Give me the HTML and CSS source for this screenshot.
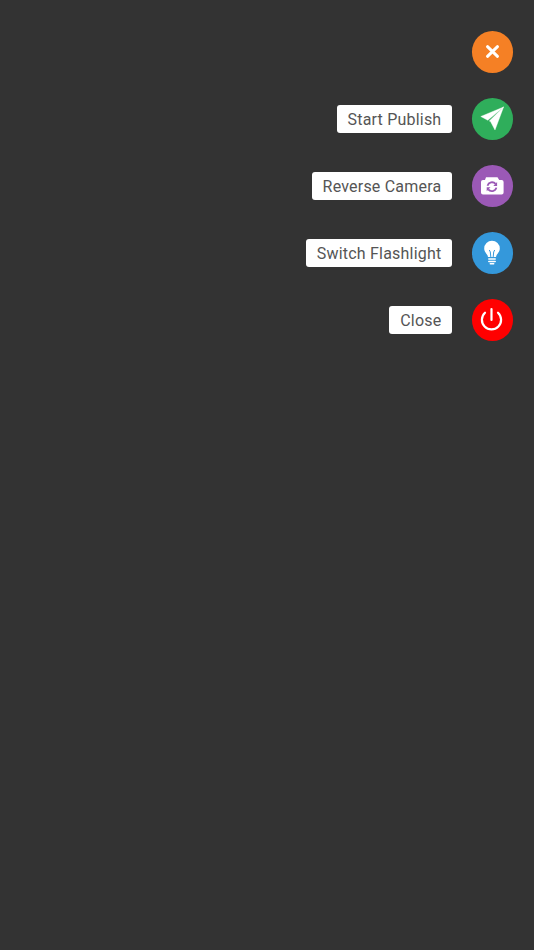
FILE: index.html
```html
<!DOCTYPE html>
<html lang="en">
<head>
<meta charset="utf-8">
<title>Actions</title>
<link rel="stylesheet" href="styles.css">
</head>
<body>
<main class="menu">
  <div class="row">
    <button class="fab fab-orange" aria-label="Toggle menu">
      <svg viewBox="0 0 41.33 41.33"><path d="M15.500 15.700 25.500 25.300M25.500 15.700 15.500 25.300" fill="none" stroke="#fff" stroke-width="3" stroke-linecap="round"/></svg>
    </button>
  </div>
  <div class="row">
    <span class="label">Start Publish</span>
    <button class="fab fab-green" aria-label="Start Publish">
      <svg viewBox="0 0 41.33 41.33"><path d="M31.600 9 8.800 18.500 15.800 22.300ZM31.600 9 17.300 23 18.500 23.500 23 32Z" fill="#fff" stroke="#fff" stroke-width="0.400" stroke-linejoin="round"/></svg>
    </button>
  </div>
  <div class="row">
    <span class="label">Reverse Camera</span>
    <button class="fab fab-purple" aria-label="Reverse Camera">
      <svg viewBox="0 0 41.33 41.33">
        <path d="M11 15H13L14 12.300H25.500L27.200 15H29.600A2 2 0 0 1 31.600 17V27.500A2 2 0 0 1 29.600 29.500H11A2 2 0 0 1 9 27.500V17A2 2 0 0 1 11 15Z" fill="#fff"/>
        <path d="M15.500 20.700A4.700 4.700 0 0 1 23.600 18.900M24.400 22.600A4.700 4.700 0 0 1 16.200 24.400" fill="none" stroke="#9b59b6" stroke-width="1.800"/>
        <path d="M25.100 17V21H21.300ZM14.700 26.300V22.300H18.500Z" fill="#9b59b6"/>
      </svg>
    </button>
  </div>
  <div class="row">
    <span class="label">Switch Flashlight</span>
    <button class="fab fab-blue" aria-label="Switch Flashlight">
      <svg viewBox="0 0 41.33 41.33">
        <path d="M20 8.700A7.800 7.800 0 0 1 27.800 16.500C27.800 20.600 24.600 21.500 24 25H16C15.400 21.500 12.200 20.600 12.200 16.500A7.800 7.800 0 0 1 20 8.700Z" fill="#fff"/>
        <path d="M18.800 25 18.300 20 17.300 18M21.200 25 21.700 20 22.700 18" fill="none" stroke="#3498db" stroke-width="1"/>
        <path d="M16.800 27H23.200M16.800 29.400H23.200M18.300 31.800H21.700" fill="none" stroke="#fff" stroke-width="1.500" stroke-linecap="round"/>
      </svg>
    </button>
  </div>
  <div class="row">
    <span class="label">Close</span>
    <button class="fab fab-red" aria-label="Close">
      <svg viewBox="0 0 41.33 41.33"><path d="M13 13.700A9.600 9.600 0 1 0 26 13.700M19.500 10V21" fill="none" stroke="#fff" stroke-width="2.200" stroke-linecap="round"/></svg>
    </button>
  </div>
</main>
</body>
</html>
```
FILE: styles.css
```css
html, body {
  margin: 0;
  height: 100%;
  background: #333333;
}
.menu {
  display: flex;
  flex-direction: column;
  align-items: flex-end;
  gap: 25.670px;
  padding: 31.330px 21px 0 0;
}
.row {
  display: flex;
  align-items: center;
  gap: 19.300px;
}
.label {
  background: #fff;
  border-radius: 3px;
  padding: 0 11px;
  height: 28.670px;
  line-height: 29.500px;
  box-sizing: border-box;
  font-family: Roboto, "Liberation Sans", sans-serif;
  font-size: 16px;
  letter-spacing: 0.2px;
  color: #555555;
  white-space: nowrap;
}
.fab {
  width: 41.330px;
  height: 41.330px;
  border: 0;
  padding: 0;
  border-radius: 50%;
  display: block;
}
.fab svg { display: block; width: 100%; height: 100%; }
.fab-orange { background: #f58025; }
.fab-green { background: #2fae5b; }
.fab-purple { background: #9b59b6; }
.fab-blue { background: #3498db; }
.fab-red { background: #ff0000; }
```
